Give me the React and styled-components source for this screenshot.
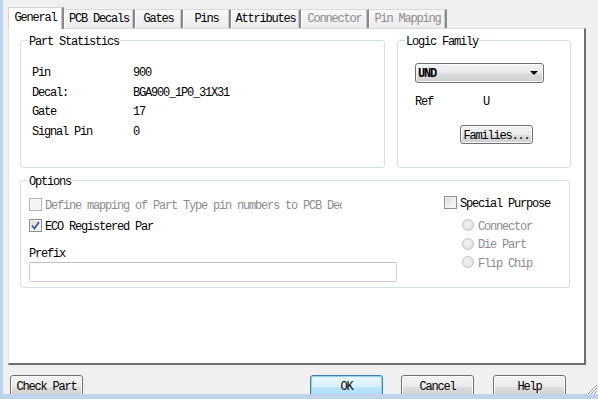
import React from "react"
import styled, { createGlobalStyle } from "styled-components"

const GlobalStyle = createGlobalStyle`
  html, body {
    margin: 0;
    padding: 0;
    background: #f0f0f0;
  }
  * {
    box-sizing: border-box;
  }
`

const Window = styled.div`
  width: 598px;
  height: 399px;
  display: flex;
  flex-direction: column;
  background: #f0f0f0;
  border-left: 3px solid #bfd4ec;
  border-bottom: 5px solid #bfd4ec;
  font-family: "Liberation Mono", "DejaVu Sans Mono", monospace;
  font-size: 12px;
  letter-spacing: -1.2px;
  color: #000;
  overflow: hidden;
`

const TabStrip = styled.div`
  display: flex;
  align-items: flex-end;
  height: 21px;
  margin-top: 7px;
  margin-left: 5px;
  position: relative;
  z-index: 1;
`

const Tab = styled.div`
  width: ${p => p.$w}px;
  height: ${p => (p.$active ? 22 : 19)}px;
  margin-bottom: ${p => (p.$active ? -1 : 0)}px;
  display: flex;
  align-items: center;
  justify-content: center;
  padding-bottom: ${p => (p.$active ? 2 : 0)}px;
  background: ${p => (p.$active ? "#fff" : "linear-gradient(#f7f7f7, #ececec)")};
  border-top: 1px solid ${p => (p.$active ? "#d4d4d4" : "#dadada")};
  border-left: 1px solid ${p => (p.$active ? "#d4d4d4" : "#fff")};
  border-right: 2px solid #8a8a8a;
  box-shadow: inset -1px 0 0 #c8c8c8;
  color: ${p => (p.$disabled ? "#8d8d8d" : "#000")};
  white-space: nowrap;
  line-height: 14px;
`

const Panel = styled.div`
  width: 578px;
  height: 337px;
  margin-left: 5px;
  background: #fff;
  border-top: 1px solid #d9d9d9;
  border-left: 1px solid #e6e6e6;
  border-right: 2px solid #6e6e6e;
  border-bottom: 2px solid #6e6e6e;
  padding: 11px 0 0 11px;
  display: flex;
  flex-direction: column;
  gap: 12px;
`

const TopRow = styled.div`
  display: grid;
  grid-template-columns: 365px 174px;
  column-gap: 12px;
`

const Group = styled.div`
  position: relative;
  width: ${p => (p.$w ? `${p.$w}px` : "auto")};
  height: ${p => p.$h}px;
  border: 1px solid #d5dfe5;
  border-radius: 3px;
`

const GroupTitle = styled.span`
  position: absolute;
  top: -6px;
  left: 7px;
  padding: 1px 1px 0;
  background: #fff;
  line-height: 13px;
  white-space: nowrap;
`

const StatsGrid = styled.div`
  display: grid;
  grid-template-columns: 101px 1fr;
  padding: 23px 0 0 11px;
  line-height: 19.5px;
`

const LogicBody = styled.div`
  display: flex;
  flex-direction: column;
  padding: 22px 0 0 17px;
`

const Combo = styled.div`
  width: 129px;
  height: 20px;
  display: flex;
  align-items: center;
  justify-content: space-between;
  padding: 2px 5px 0 2px;
  border: 1px solid #707070;
  border-radius: 3px;
  background: linear-gradient(#f2f2f2 0%, #ebebeb 50%, #dddddd 51%, #cfcfcf 100%);
  box-shadow: inset 0 0 0 1px #fcfcfc;
  font-weight: bold;
`

const Arrow = styled.span`
  width: 0;
  height: 0;
  margin-top: -2px;
  border-left: 4px solid transparent;
  border-right: 4px solid transparent;
  border-top: 4px solid #000;
`

const RefRow = styled.div`
  display: grid;
  grid-template-columns: 68px 1fr;
  margin-top: 12px;
  line-height: 14px;
`

const Button = styled.div`
  width: ${p => p.$w || 73}px;
  height: ${p => p.$h || 23}px;
  flex: none;
  display: flex;
  align-items: center;
  justify-content: center;
  border: 1px solid ${p => (p.$default ? "#3c7fb1" : "#707070")};
  border-radius: 3px;
  background: ${p =>
    p.$default
      ? "linear-gradient(#eaf6fd 0%, #d9f0fc 50%, #bee6fd 51%, #a7d9f5 100%)"
      : "linear-gradient(#f2f2f2 0%, #ebebeb 50%, #dddddd 51%, #cfcfcf 100%)"};
  box-shadow: inset 0 0 0 1px ${p => (p.$default ? "#8fd4f5" : "#fcfcfc")};
  white-space: nowrap;
  line-height: 14px;
  padding-top: ${p => (p.$h ? 2 : 0)}px;
`

const FamiliesButton = styled(Button)`
  margin-top: 16px;
  margin-left: 45px;
`

const OptionsBody = styled.div`
  display: flex;
  padding-left: 8px;
`

const LeftColumn = styled.div`
  width: 415px;
  display: flex;
  flex-direction: column;
  padding-top: 13px;
`

const RightColumn = styled.div`
  display: flex;
  flex-direction: column;
  padding-top: 11px;
`

const CheckRow = styled.div`
  display: flex;
  align-items: center;
  gap: 3px;
  height: 20px;
  margin-bottom: ${p => p.$mb || 0}px;
  color: ${p => (p.$disabled ? "#8d8d8d" : "#000")};
`

const RowText = styled.span`
  padding-top: 3px;
  white-space: nowrap;
`

const Clipped = styled(RowText)`
  width: 297px;
  overflow: hidden;
`

const Box = styled.span`
  width: 13px;
  height: 13px;
  flex: none;
  display: flex;
  align-items: center;
  justify-content: center;
  border: 1px solid ${p => (p.$disabled ? "#b5b5b5" : "#8e8f8f")};
  background: ${p =>
    p.$disabled
      ? "#f4f4f4"
      : "linear-gradient(135deg, #d8d8d8 0%, #f4f4f4 70%, #ffffff 100%)"};
  box-shadow: inset 0 0 0 1px ${p => (p.$disabled ? "#f8f8f8" : "#f4f4f4")};
`

const Label = styled.div`
  line-height: 14px;
  margin-top: 12px;
`

const TextInput = styled.div`
  width: 368px;
  height: 20px;
  margin-top: 1px;
  border: 1px solid #d0d0d0;
  border-top-color: #c2c2c2;
  border-radius: 2px;
  background: #fff;
`

const RadioList = styled.div`
  display: flex;
  flex-direction: column;
  padding: 4px 0 0 18px;
`

const RadioRow = styled.div`
  display: flex;
  align-items: center;
  gap: 4px;
  height: 18.5px;
  color: #8d8d8d;
`

const Radio = styled.span`
  width: 12px;
  height: 12px;
  flex: none;
  border-radius: 50%;
  border: 1px solid #c4c4c4;
  background: radial-gradient(circle at 40% 40%, #f4f4f4 0%, #e2e2e2 70%, #d6d6d6 100%);
`

const ButtonBar = styled.div`
  height: 19px;
  margin-top: 10px;
  display: flex;
  align-items: flex-start;
  padding-left: 7px;
  overflow: hidden;
`

const Spacer = styled.div`
  flex: 1;
`

const Gap = styled.div`
  width: ${p => p.$w}px;
  flex: none;
`

const Grip = styled.svg`
  align-self: flex-end;
  flex: none;
  margin-left: 20px;
`

const Check = () => (
  <svg width="9" height="9" viewBox="0 0 9 9">
    <path d="M1 4.5 L3.5 7.5 L8 1" fill="none" stroke="#3a5a9c" strokeWidth="1.8" />
  </svg>
)

const stats = [
  ["Pin", "900"],
  ["Decal:", "BGA900_1P0_31X31"],
  ["Gate", "17"],
  ["Signal Pin", "0"],
]

const tabs = [
  { label: "General", w: 56, active: true },
  { label: "PCB Decals", w: 71 },
  { label: "Gates", w: 48 },
  { label: "Pins", w: 48 },
  { label: "Attributes", w: 70 },
  { label: "Connector", w: 68, disabled: true },
  { label: "Pin Mapping", w: 78, disabled: true },
]

const App = () => {
  return (
    <Window>
      <GlobalStyle />
      <TabStrip>
        {tabs.map(t => (
          <Tab key={t.label} $w={t.w} $active={t.active} $disabled={t.disabled}>
            {t.label}
          </Tab>
        ))}
      </TabStrip>
      <Panel>
        <TopRow>
          <Group $h={128}>
            <GroupTitle>Part Statistics</GroupTitle>
            <StatsGrid>
              {stats.map(([k, v]) => (
                <React.Fragment key={k}>
                  <span>{k}</span>
                  <span>{v}</span>
                </React.Fragment>
              ))}
            </StatsGrid>
          </Group>
          <Group $h={128}>
            <GroupTitle>Logic Family</GroupTitle>
            <LogicBody>
              <Combo>
                <span>UND</span>
                <Arrow />
              </Combo>
              <RefRow>
                <span>Ref</span>
                <span>U</span>
              </RefRow>
              <FamiliesButton $h={19}>Families...</FamiliesButton>
            </LogicBody>
          </Group>
        </TopRow>
        <Group $w={550} $h={108}>
          <GroupTitle>Options</GroupTitle>
          <OptionsBody>
            <LeftColumn>
              <CheckRow $disabled $mb={1}>
                <Box $disabled />
                <Clipped>Define mapping of Part Type pin numbers to PCB Decals</Clipped>
              </CheckRow>
              <CheckRow>
                <Box>
                  <Check />
                </Box>
                <RowText>ECO Registered Par</RowText>
              </CheckRow>
              <Label>Prefix</Label>
              <TextInput />
            </LeftColumn>
            <RightColumn>
              <CheckRow>
                <Box />
                <RowText>Special Purpose</RowText>
              </CheckRow>
              <RadioList>
                {["Connector", "Die Part", "Flip Chip"].map(r => (
                  <RadioRow key={r}>
                    <Radio />
                    <RowText>{r}</RowText>
                  </RadioRow>
                ))}
              </RadioList>
            </RightColumn>
          </OptionsBody>
        </Group>
      </Panel>
      <ButtonBar>
        <Button $w={73}>Check Part</Button>
        <Spacer />
        <Button $default>OK</Button>
        <Gap $w={18} />
        <Button>Cancel</Button>
        <Gap $w={19} />
        <Button>Help</Button>
        <Grip width="12" height="10" viewBox="0 0 12 10">
          <path d="M11 1 L2 10 M11 4 L5 10 M11 7 L8 10" stroke="#a0a0a0" strokeWidth="1" />
        </Grip>
      </ButtonBar>
    </Window>
  )
}

export default App
